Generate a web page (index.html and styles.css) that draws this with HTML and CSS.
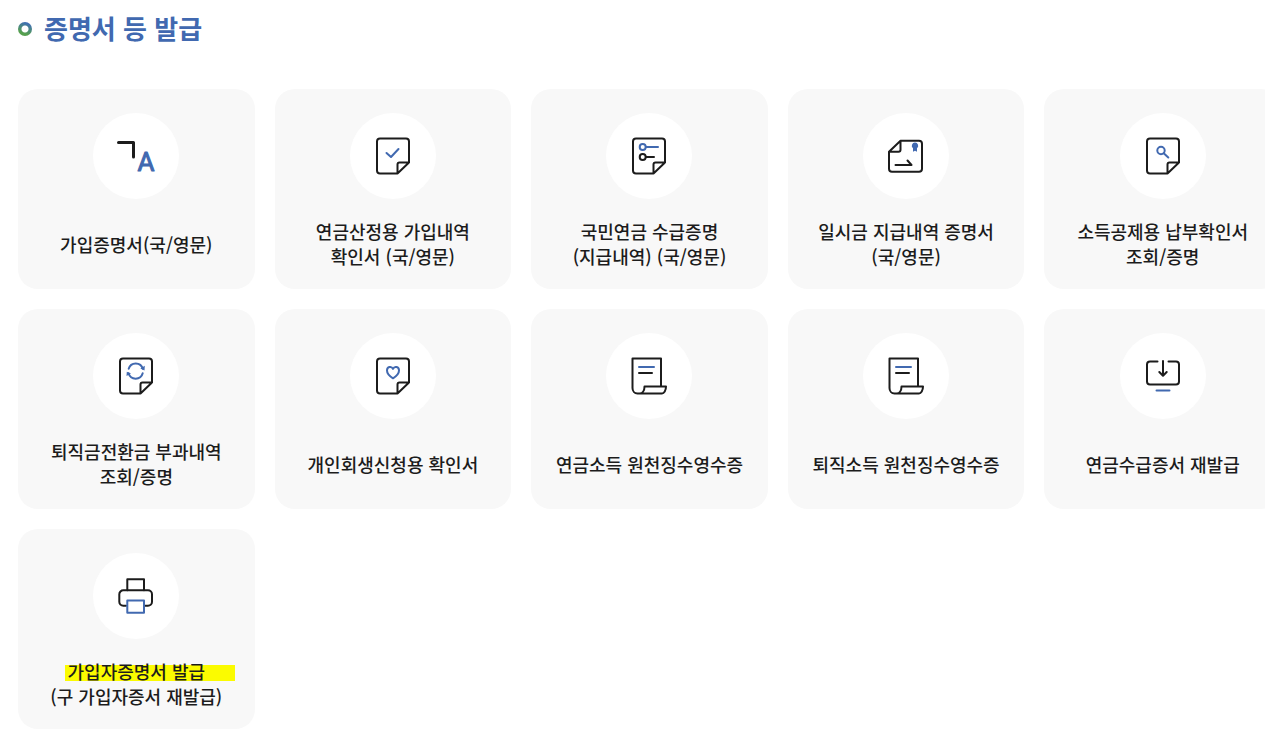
FILE: index.html
```html
<!doctype html>
<html lang="ko">
<head>
    <meta charset="utf-8">
    <meta name="viewport" content="width=device-width, initial-scale=1">
    <title>증명서 등 발급</title>
    <link rel="stylesheet" href="styles.css">
</head>
<body>
    <svg class="sprite" aria-hidden="true">
        <symbol id="doc" viewBox="0 0 40 40">
            <path d="M24.5 37.5H7a3 3 0 0 1-3-3V5.5a3 3 0 0 1 3-3h26a3 3 0 0 1 3 3v21zM24.5 37.5v-9a2 2 0 0 1 2-2H36"/>
        </symbol>
        <symbol id="receipt" viewBox="0 0 40 40">
            <path d="M32 30V2.5H3.5V32c0 3 2 5.5 5 5.5H33c2 0 4-3 4-7H15.500c0 4-2 7-5 7"/>
            <path class="blue" d="M10 11h15"/>
            <path d="M10 17h13"/>
        </symbol>
    </svg>

    <main class="issue">
        <h2 class="issue_title">증명서 등 발급</h2>
        <ul class="issue_list">
            <li>
                <a class="card" href="#">
                    <span class="card_icon">
                        <svg viewBox="0 0 40 40" aria-hidden="true">
                            <path class="thick" d="M2.500 6.500h15v14.500"/>
                            <text class="letter" x="30" y="35" text-anchor="middle">A</text>
                        </svg>
                    </span>
                    <span class="card_text">가입증명서(국/영문)</span>
                </a>
            </li>
            <li>
                <a class="card" href="#">
                    <span class="card_icon">
                        <svg viewBox="0 0 40 40" aria-hidden="true">
                            <use href="#doc"/>
                            <path class="blue" d="M13.5 17l4.5 4 7.5-8"/>
                        </svg>
                    </span>
                    <span class="card_text">연금산정용 가입내역<br>확인서 (국/영문)</span>
                </a>
            </li>
            <li>
                <a class="card" href="#">
                    <span class="card_icon">
                        <svg viewBox="0 0 40 40" aria-hidden="true">
                            <use href="#doc"/>
                            <g class="blue"><circle cx="13.7" cy="11" r="3"/><path d="M17 11h12"/></g>
                            <circle cx="13.7" cy="21" r="3"/><path d="M17 21h8"/>
                        </svg>
                    </span>
                    <span class="card_text">국민연금 수급증명<br>(지급내역) (국/영문)</span>
                </a>
            </li>
            <li>
                <a class="card" href="#">
                    <span class="card_icon">
                        <svg viewBox="0 0 40 40" aria-hidden="true">
                            <path d="M14.5 4.7H33a3 3 0 0 1 3 3v25a3 3 0 0 1-3 3H6a3 3 0 0 1-3-3V15.7zM14.5 4.7v9a2 2 0 0 1-2 2H3"/>
                            <path d="M9.5 29h16l-4-4.5"/>
                            <path class="fill" d="M29 6.5a3.2 3.2 0 0 1 2 5.7v3.5l-2-1-2 1v-3.5a3.2 3.2 0 0 1 2-5.7z"/>
                        </svg>
                    </span>
                    <span class="card_text">일시금 지급내역 증명서<br>(국/영문)</span>
                </a>
            </li>
            <li>
                <a class="card" href="#">
                    <span class="card_icon">
                        <svg viewBox="0 0 40 40" aria-hidden="true">
                            <use href="#doc"/>
                            <g class="blue"><circle cx="18" cy="14.5" r="3.7"/><path d="M20.7 17.2l4.6 4.3"/></g>
                        </svg>
                    </span>
                    <span class="card_text">소득공제용 납부확인서<br>조회/증명</span>
                </a>
            </li>
            <li>
                <a class="card" href="#">
                    <span class="card_icon">
                        <svg viewBox="0 0 40 40" aria-hidden="true">
                            <use href="#doc"/>
                            <path class="blue" d="M12.7 12.8a7.3 7.3 0 0 1 14.1 0M26.7 17.3a7.3 7.3 0 0 1-14.1 0"/>
                            <path class="fill" d="M24.3 12.5l4.2 1.9.3-4.6zM15 17.6l-4.2-1.9-.3 4.4z"/>
                        </svg>
                    </span>
                    <span class="card_text">퇴직금전환금 부과내역<br>조회/증명</span>
                </a>
            </li>
            <li>
                <a class="card" href="#">
                    <span class="card_icon">
                        <svg viewBox="0 0 40 40" aria-hidden="true">
                            <use href="#doc"/>
                            <path class="blue" d="M20 22.3c-3-1.8-6-4.3-6-7.7 0-4 4.5-5 6-1.7 1.5-3.3 6-2.3 6 1.7 0 3.4-3 5.9-6 7.7z"/>
                        </svg>
                    </span>
                    <span class="card_text">개인회생신청용 확인서</span>
                </a>
            </li>
            <li>
                <a class="card" href="#">
                    <span class="card_icon">
                        <svg viewBox="0 0 40 40" aria-hidden="true"><use href="#receipt"/></svg>
                    </span>
                    <span class="card_text">연금소득 원천징수영수증</span>
                </a>
            </li>
            <li>
                <a class="card" href="#">
                    <span class="card_icon">
                        <svg viewBox="0 0 40 40" aria-hidden="true"><use href="#receipt"/></svg>
                    </span>
                    <span class="card_text">퇴직소득 원천징수영수증</span>
                </a>
            </li>
            <li>
                <a class="card" href="#">
                    <span class="card_icon">
                        <svg viewBox="0 0 40 40" aria-hidden="true">
                            <path d="M14.5 5.5H7a3 3 0 0 0-3 3v17a3 3 0 0 0 3 3h26a3 3 0 0 0 3-3v-17a3 3 0 0 0-3-3h-7.5"/>
                            <path d="M20 5v14.5M16.3 16l3.7 3.7 3.7-3.7"/>
                            <path class="blue" d="M13.5 34.5h13"/>
                        </svg>
                    </span>
                    <span class="card_text">연금수급증서 재발급</span>
                </a>
            </li>
            <li>
                <a class="card" href="#">
                    <span class="card_icon">
                        <svg viewBox="0 0 40 40" aria-hidden="true">
                            <path d="M11.3 14.3v-11H28v11"/>
                            <path d="M10 29.7H7.3a4 4 0 0 1-4-4v-7.4a4 4 0 0 1 4-4H32a4 4 0 0 1 4 4v7.4a4 4 0 0 1-4 4h-2.7"/>
                            <path class="blue" d="M11.3 24.5H28v12.2H11.3z"/>
                        </svg>
                    </span>
                    <span class="card_text"><mark class="marker">가입자증명서 발급</mark><br>(구 가입자증서 재발급)</span>
                </a>
            </li>
        </ul>
    </main>
</body>
</html>
```

FILE: styles.css
```css
* {
    box-sizing: border-box;
}
body {
    margin: 0;
    background: #fff;
    color: #1c1c1c;
    font-family: "Noto Sans CJK KR", sans-serif;
}
.sprite {
    display: block;
    width: 0;
    height: 0;
}
.issue {
    padding: 8px 0 11px 18px;
    overflow: hidden;
}
.issue_title {
    display: flex;
    align-items: center;
    gap: 12px;
    margin: 0 0 41px;
    color: #4169b0;
    font-size: 26px;
    font-weight: 700;
    line-height: 40px;
}
.issue_title::before {
    content: "";
    width: 14px;
    height: 14px;
    margin-top: 2px;
    border-radius: 50%;
    background: radial-gradient(circle, #fff 3px, transparent 4px), linear-gradient(200deg, #3f6fb5 15%, #56a04e 75%);
}

/* the last column runs off the right edge */
.issue_list {
    display: grid;
    grid-template-columns: repeat(5, 1fr);
    gap: 20px;
    margin: 0 -16px 0 0;
    padding: 0;
    list-style: none;
}
.card {
    display: flex;
    flex-direction: column;
    align-items: center;
    gap: 20px;
    padding: 24px 0 20px;
    border-radius: 20px;
    background: #f8f8f8;
    color: inherit;
    text-decoration: none;
}
.card_icon {
    display: flex;
    align-items: center;
    justify-content: center;
    width: 86px;
    height: 86px;
    border-radius: 50%;
    background: #fff;
}
.card_icon svg {
    width: 40px;
    height: 40px;
    overflow: visible;
    fill: none;
    stroke: #1c1c1c;
    stroke-width: 2;
    stroke-linecap: round;
    stroke-linejoin: round;
}
.blue {
    stroke: #4169b0;
}
.fill {
    fill: #4169b0;
    stroke: none;
}
.thick {
    stroke-width: 3;
}
.letter {
    fill: #4169b0;
    stroke: #4169b0;
    stroke-width: 1;
    font-family: Roboto, sans-serif;
    font-size: 26px;
    font-weight: 400;
}
.card_text {
    display: flow-root;
    min-height: 50px;
    align-content: center;
    font-size: 18px;
    font-weight: 500;
    line-height: 25px;
    text-align: center;
    white-space: nowrap;
}

/* highlighter stroke drawn behind the name */
.marker {
    position: relative;
    isolation: isolate;
    background: none;
    color: inherit;
}
.marker::before {
    content: "";
    position: absolute;
    z-index: -1;
    inset: 7px -30px 3px -3px;
    background: #fbfb00;
}
```
